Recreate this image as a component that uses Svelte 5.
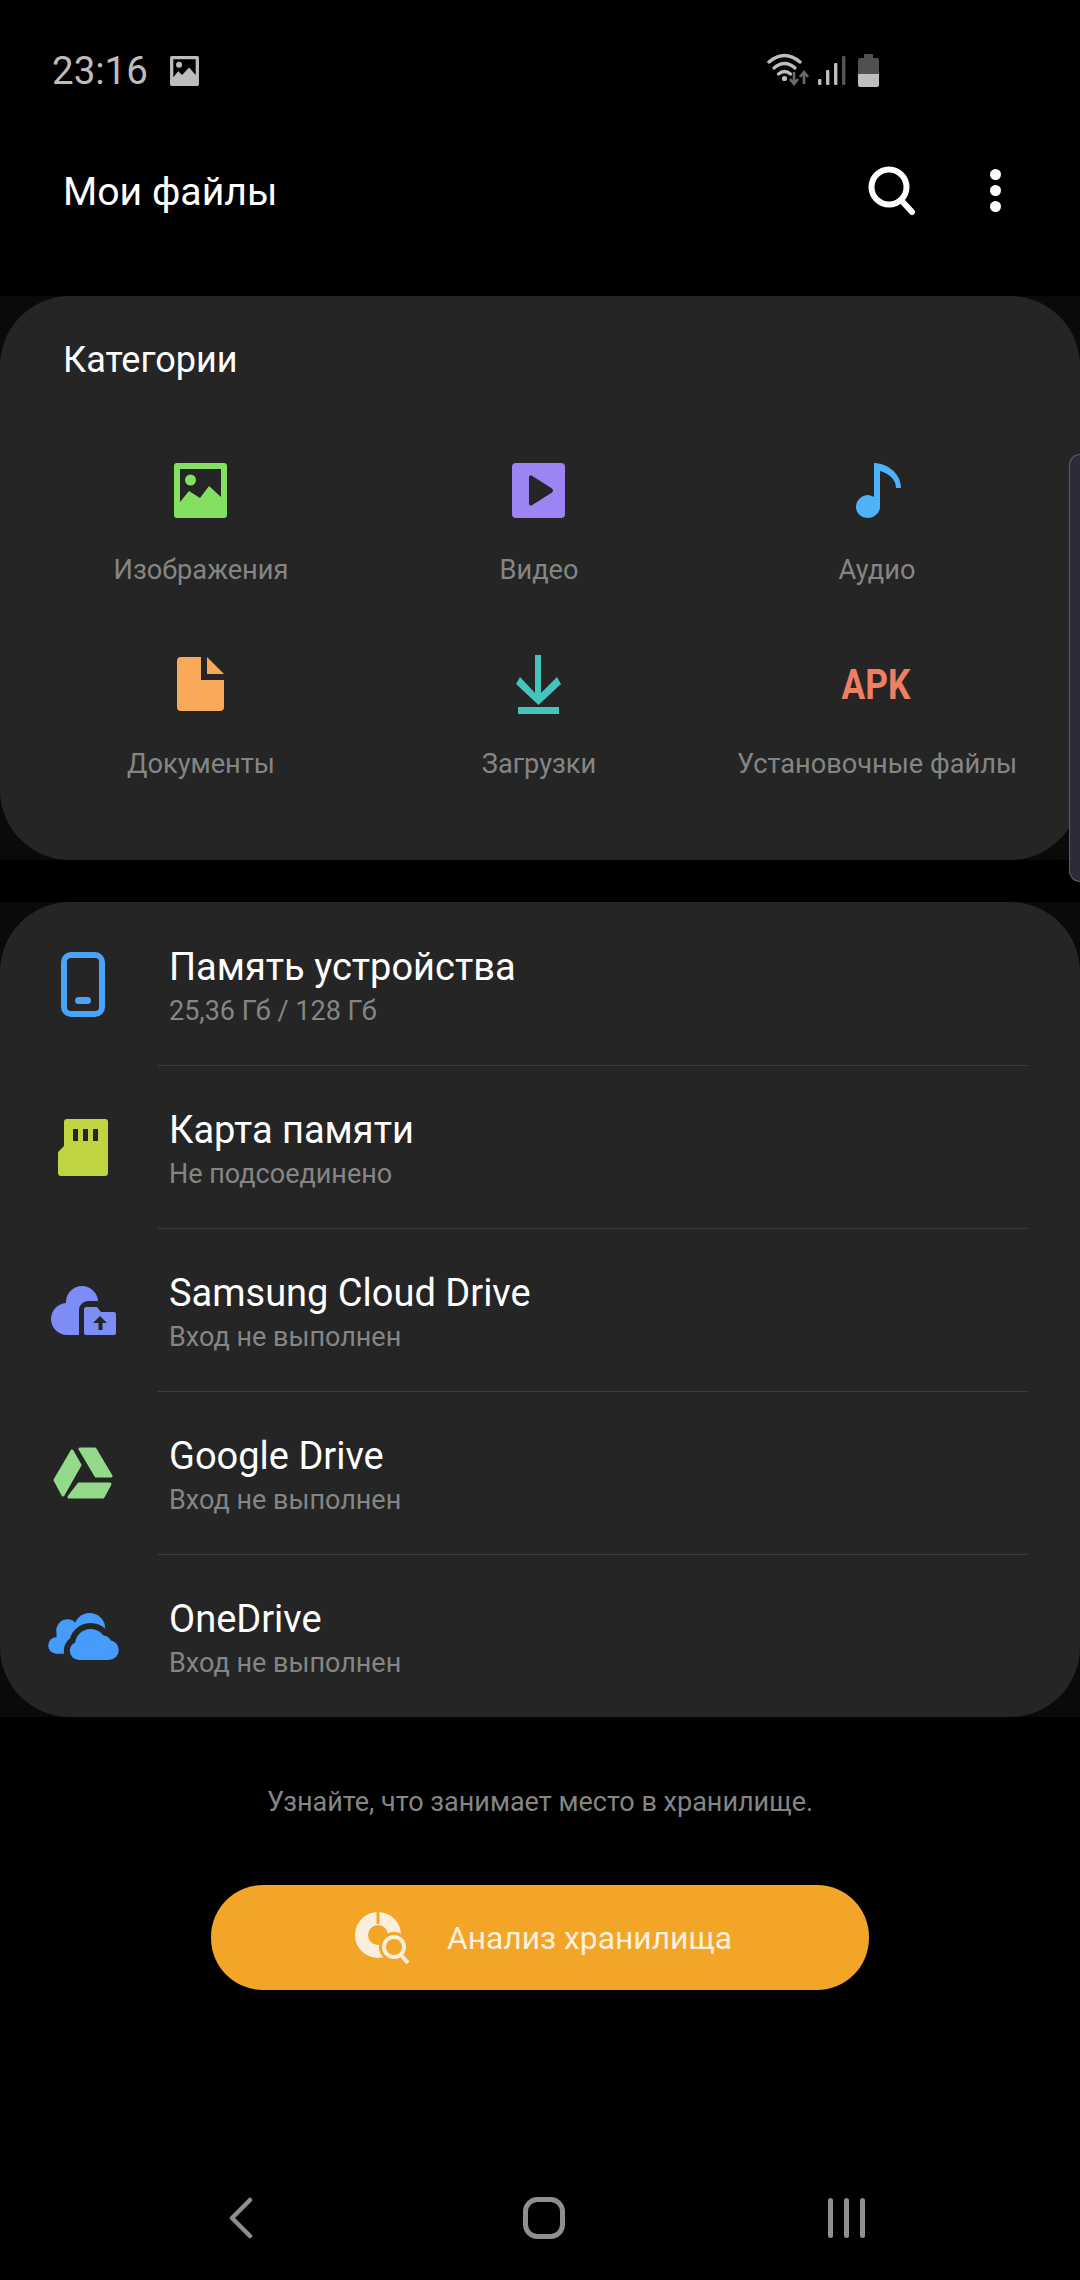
<script>
  // категории и хранилища
  const categories = [
    { id: "images", label: "Изображения" },
    { id: "video", label: "Видео" },
    { id: "audio", label: "Аудио" },
    { id: "docs", label: "Документы" },
    { id: "downloads", label: "Загрузки" },
    { id: "apk", label: "Установочные файлы" }
  ];

  const storages = [
    { id: "phone", title: "Память устройства", sub: "25,36 Гб / 128 Гб" },
    { id: "sd", title: "Карта памяти", sub: "Не подсоединено" },
    { id: "samsung", title: "Samsung Cloud Drive", sub: "Вход не выполнен" },
    { id: "gdrive", title: "Google Drive", sub: "Вход не выполнен" },
    { id: "onedrive", title: "OneDrive", sub: "Вход не выполнен" }
  ];
</script>

<div class="page">
  <div class="status">
    <div class="status-left">
      <span class="time">23:16</span>
      <svg width="31" height="30" viewBox="0 0 53 55">
        <path fill="#bdbdbd" fill-rule="evenodd" d="M3 0H50a3 3 0 0 1 3 3V52a3 3 0 0 1-3 3H3a3 3 0 0 1-3-3V3a3 3 0 0 1 3-3ZM6 6V39L15 28 22 35 35 21 47 35V6Z" />
        <circle cx="16.5" cy="16" r="5.5" fill="#bdbdbd" />
      </svg>
    </div>
    <svg class="status-right" width="114" height="36" viewBox="0 0 114 36">
      <g fill="none" stroke="#bdbdbd" stroke-width="3.4" stroke-linecap="round">
        <path d="M2 10Q17.5-3 33 10" />
        <path d="M7 16Q17.5 7 28 16" />
        <path d="M11.5 22Q17.5 17 23.5 22" />
      </g>
      <circle cx="17.5" cy="26.5" r="2.6" fill="#bdbdbd" />
      <path fill="none" stroke="#6a6a6a" stroke-width="2.6" d="M27 20V31M23 27l4 5 4-5M37 32V21M33 25l4-5 4 5" />
      <rect x="51" y="27" width="3.4" height="6" rx="1" fill="#bdbdbd" />
      <rect x="59" y="18" width="3.4" height="15" rx="1" fill="#bdbdbd" />
      <rect x="67" y="11" width="3.4" height="22" rx="1" fill="#bdbdbd" />
      <rect x="75" y="4" width="3.4" height="29" rx="1" fill="#555" />
      <path fill="#505050" d="M97 2h9v4h4a2 2 0 0 1 2 2V22H91V8a2 2 0 0 1 2-2h4Z" />
      <path fill="#bdbdbd" d="M91 22h21V33a2 2 0 0 1-2 2H93a2 2 0 0 1-2-2Z" />
    </svg>
  </div>

  <header class="appbar">
    <h1>Мои файлы</h1>
    <div class="actions">
      <svg width="50" height="50" viewBox="0 0 50 50" fill="none" stroke="#fff" stroke-width="6">
        <circle cx="23" cy="22" r="17.5" />
        <path d="M35 35L46 47" stroke-linecap="round" />
      </svg>
      <div class="dots"><i></i><i></i><i></i></div>
    </div>
  </header>

  <div class="card-bg">
    <section class="card">
      <h2>Категории</h2>
      <div class="grid">
        {#each categories as c}
          <div class="cat">
            <div class="cat-icon">
              {#if c.id === "images"}
                <svg width="53" height="55" viewBox="0 0 53 55">
                  <path fill="#84e060" fill-rule="evenodd" d="M3 0H50a3 3 0 0 1 3 3V52a3 3 0 0 1-3 3H3a3 3 0 0 1-3-3V3a3 3 0 0 1 3-3ZM6 6V39L15 28 26 35 35 23 47 34V6Z" />
                  <circle cx="16.5" cy="17" r="5.5" fill="#84e060" />
                </svg>
              {:else if c.id === "video"}
                <svg width="53" height="55" viewBox="0 0 53 55">
                  <rect width="53" height="55" rx="4" fill="#9d84f3" />
                  <path fill="#252525" d="M17 14.5c0-2 2-2.800 3.300-1.600L40 25.500c1.300 1 1.300 3 0 4L20.300 42c-1.300 1.200-3.300.4-3.300-1.600Z" />
                </svg>
              {:else if c.id === "audio"}
                <svg class="audio" width="45" height="55" viewBox="0 0 45 55">
                  <path fill="#4fb2f6" d="M18 0C34 1 45 12 45 25H40C40 16 32 10 24 8V44C24 50 18 55 12 55 5 55 0 50 0 44 0 37 6 32 12 32 14 32 16 33 18 34Z" />
                </svg>
              {:else if c.id === "docs"}
                <svg width="47" height="54" viewBox="0 0 47 54">
                  <path fill="#f8a95a" d="M4 0H24V23H47V50a4 4 0 0 1-4 4H4a4 4 0 0 1-4-4V4a4 4 0 0 1 4-4Z" />
                  <path fill="#f8a95a" d="M30 0L47 17H30Z" />
                </svg>
              {:else if c.id === "downloads"}
                <svg width="45" height="59" viewBox="0 0 45 59">
                  <path fill="#45c4bd" d="M19 0h6V38L41 22 45 29 22.500 50 0 29 4 22 19 38ZM2 52H43V59H2Z" />
                </svg>
              {:else}
                <span class="apk">APK</span>
              {/if}
            </div>
            <div class="cat-label">{c.label}</div>
          </div>
        {/each}
      </div>
    </section>
  </div>

  <div class="card-bg second">
    <section class="card list">
      {#each storages as s, i}
        {#if i > 0}
          <div class="divider"></div>
        {/if}
        <div class="row">
          <div class="row-icon">
            {#if s.id === "phone"}
              <svg width="44" height="65" viewBox="0 0 44 65">
                <rect x="3" y="3" width="38" height="59" rx="7" fill="none" stroke="#49a3f8" stroke-width="6" />
                <rect x="14" y="45" width="16" height="7" rx="3.500" fill="#49a3f8" />
              </svg>
            {:else if s.id === "sd"}
              <svg width="50" height="57" viewBox="0 0 50 57">
                <path fill="#bfd440" fill-rule="evenodd" d="M9 0H47a3 3 0 0 1 3 3V54a3 3 0 0 1-3 3H3a3 3 0 0 1-3-3V34a3 3 0 0 1 1-2l5-5V3a3 3 0 0 1 3-3ZM15 10V22H20V10ZM25 10V22H30V10ZM35 10V22H40V10Z" />
              </svg>
            {:else if s.id === "samsung"}
              <svg width="65" height="49" viewBox="0 0 65 49">
                <circle cx="31" cy="16" r="16" fill="#7d8cf6" />
                <circle cx="16" cy="33" r="16" fill="#7d8cf6" />
                <rect x="16" y="14" width="24" height="35" fill="#7d8cf6" />
                <path fill="#252525" d="M28 49V24a9 9 0 0 1 9-9H65V49Z" />
                <path fill="#7d8cf6" d="M35 21H46L50 26H63a2 2 0 0 1 2 2V47a2 2 0 0 1-2 2H35a2 2 0 0 1-2-2V23a2 2 0 0 1 2-2Z" />
                <path fill="#252525" d="M49 30L56 37H51.500V44H47.500V37H42Z" />
              </svg>
            {:else if s.id === "gdrive"}
              <svg width="60" height="52" viewBox="0 0 60 52">
                <g fill="#93db8a" stroke="#93db8a" stroke-width="3" stroke-linejoin="round">
                  <path d="M19 4L27 18 10 48 2 33Z" />
                  <path d="M27 2H42L58 29H43Z" />
                  <path d="M26 37H57L50 50H16Z" />
                </g>
              </svg>
            {:else}
              <svg width="71" height="47" viewBox="147 965 213 142">
                <g fill="#469cfb">
                  <circle cx="172" cy="1063" r="25" />
                  <circle cx="205" cy="1017" r="33" />
                  <circle cx="272" cy="1012" r="47" />
                  <rect x="172" y="1010" width="90" height="78" />
                </g>
                <g fill="#252525" stroke="#252525" stroke-width="36">
                  <circle cx="275" cy="1060" r="47" />
                  <circle cx="330" cy="1077" r="30" />
                  <circle cx="240" cy="1079" r="28" />
                </g>
                <g fill="#469cfb">
                  <circle cx="275" cy="1060" r="47" />
                  <circle cx="330" cy="1077" r="30" />
                  <circle cx="240" cy="1079" r="28" />
                  <circle cx="312" cy="1058" r="26" />
                  <rect x="240" y="1060" width="90" height="47" />
                </g>
              </svg>
            {/if}
          </div>
          <div class="row-text">
            <div class="row-title">{s.title}</div>
            <div class="row-sub">{s.sub}</div>
          </div>
        </div>
      {/each}
    </section>
  </div>

  <p class="hint">Узнайте, что занимает место в хранилище.</p>

  <button class="analyze">
    <svg width="56" height="52" viewBox="0 0 56 52">
      <circle cx="24" cy="23" r="16.500" fill="none" stroke="#fbeedd" stroke-width="13" />
      <path d="M24-1V12" stroke="#f3a527" stroke-width="3" />
      <circle cx="40" cy="35" r="15" fill="#f3a527" />
      <circle cx="40" cy="35" r="10" fill="none" stroke="#fbeedd" stroke-width="4" />
      <path d="M47 43L54 51" stroke="#fbeedd" stroke-width="4" />
    </svg>
    <span>Анализ хранилища</span>
  </button>

  <nav class="nav">
    <div class="nav-slot">
      <svg width="24" height="42" viewBox="0 0 24 42" fill="none" stroke="#8f8f8f" stroke-width="4.500" stroke-linecap="round" stroke-linejoin="round">
        <path d="M21 3L3 21 21 39" />
      </svg>
    </div>
    <div class="nav-slot">
      <svg width="42" height="42" viewBox="0 0 42 42">
        <rect x="2.500" y="2.500" width="37" height="37" rx="12" fill="none" stroke="#8f8f8f" stroke-width="5" />
      </svg>
    </div>
    <div class="nav-slot">
      <svg width="37" height="42" viewBox="0 0 37 42" fill="#8f8f8f">
        <rect x="0" y="1" width="5" height="40" rx="2.500" />
        <rect x="16" y="1" width="5" height="40" rx="2.500" />
        <rect x="32" y="1" width="5" height="40" rx="2.500" />
      </svg>
    </div>
  </nav>

  <!-- edge panel handle -->
  <div class="edge"></div>
</div>

<style>
  :global(body) {
    background: #000;
  }
  .page {
    position: relative;
    width: 1080px;
    height: 2280px;
    overflow: hidden;
    background: #000;
    font-family: Roboto, "Noto Sans", sans-serif;
    color: #fff;
  }
  .status {
    height: 142px;
    box-sizing: border-box;
    padding: 0 199px 0 52px;
    display: flex;
    align-items: center;
    justify-content: space-between;
  }
  .status-left {
    display: flex;
    align-items: center;
    gap: 21px;
  }
  .status-right {
    margin-bottom: 2px;
  }
  .time {
    font-size: 38.5px;
    color: #bdbdbd;
    line-height: 44px;
  }
  .appbar {
    height: 100px;
    margin-bottom: 54px;
    padding: 0 79px 0 63px;
    display: flex;
    align-items: center;
    justify-content: space-between;
  }
  h1 {
    margin: 0;
    font-size: 39.2px;
    font-weight: 400;
  }
  .actions {
    display: flex;
    align-items: center;
    gap: 74px;
    margin-bottom: 4px;
  }
  .dots {
    display: flex;
    flex-direction: column;
    gap: 5px;
  }
  .dots i {
    display: block;
    width: 11px;
    height: 11px;
    border-radius: 50%;
    background: #fff;
  }
  .card-bg {
    background: #0a0a0a;
  }
  .second {
    margin-top: 42px;
  }
  .card {
    background: #252525;
    border-radius: 70px;
    height: 564px;
    box-sizing: border-box;
    padding-top: 40px;
  }
  h2 {
    margin: 0;
    padding-left: 63px;
    font-size: 36px;
    line-height: 48px;
    font-weight: 400;
  }
  .grid {
    margin-top: 74px;
    padding: 0 34px 0 32px;
    display: grid;
    grid-template-columns: repeat(3, 1fr);
  }
  .cat {
    height: 194px;
    display: flex;
    flex-direction: column;
    align-items: center;
  }
  .cat-icon {
    height: 64px;
    margin-right: 2px;
    display: flex;
    align-items: center;
    justify-content: center;
  }
  .audio {
    margin-left: 5px;
  }
  .cat-label {
    margin-top: 32px;
    line-height: 32px;
    font-size: 27.2px;
    color: #858585;
    white-space: nowrap;
  }
  .apk {
    display: block;
    font-size: 43px;
    font-weight: 700;
    color: #ee7f64;
    transform: scaleX(0.82);
  }
  .list {
    height: 815px;
    padding-top: 1px;
  }
  .row {
    height: 162px;
    display: flex;
    align-items: center;
  }
  .row-icon {
    width: 120px;
    margin: 0 25px 0 23px;
    display: flex;
    justify-content: center;
  }
  .row-text {
    padding: 7px 0 0 1px;
  }
  .row-title {
    font-size: 38px;
    line-height: 46px;
  }
  .row-sub {
    margin-top: 1px;
    font-size: 27px;
    line-height: 40px;
    color: #858585;
  }
  .divider {
    height: 1px;
    margin: 0 53px 0 158px;
    background: #3d3d3d;
  }
  .hint {
    margin: 67px 0 0;
    text-align: center;
    font-size: 27px;
    line-height: 36px;
    color: #858585;
  }
  .analyze {
    display: flex;
    align-items: center;
    justify-content: center;
    gap: 37px;
    width: 658px;
    height: 105px;
    margin: 65px 0 0 211px;
    padding: 0 0 0 6px;
    border: none;
    border-radius: 52px;
    background: #f3a527;
    font-family: inherit;
    font-size: 31.8px;
    color: #fdf0dc;
  }
  .nav {
    margin-top: 207px;
    padding-left: 90px;
    display: flex;
  }
  .nav-slot {
    width: 302.5px;
    display: flex;
    justify-content: center;
  }
  .edge {
    position: absolute;
    top: 454px;
    right: 0;
    width: 11px;
    height: 428px;
    box-sizing: border-box;
    background: #2d2b3a;
    border: 1px solid #5c5c62;
    border-right: none;
    border-radius: 12px 0 0 12px;
  }
</style>
